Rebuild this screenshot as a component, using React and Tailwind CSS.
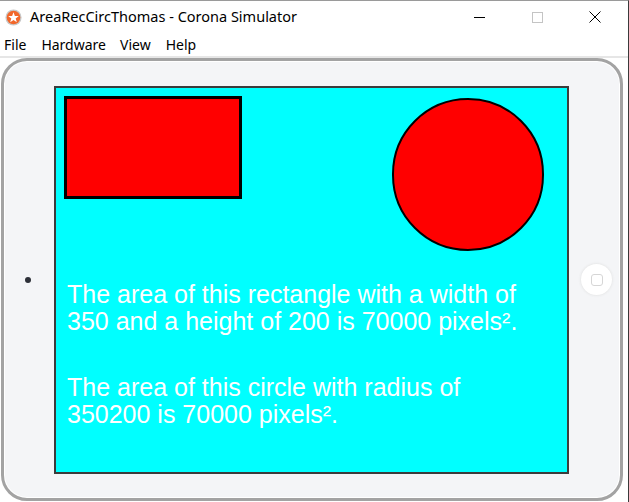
import React from 'react';

const CoronaIcon = () => (
    <svg width="17" height="17" viewBox="0 0 20 20">
        <circle cx="10" cy="10" r="9.5" fill="#c8c8c8" />
        <circle cx="10" cy="10" r="8" fill="#f2672a" />
        <polygon
            points="10,3.8 11.6,8.2 16.2,8.3 12.6,11.1 13.9,15.6 10,13 6.1,15.6 7.4,11.1 3.8,8.3 8.4,8.2"
            fill="#ffffff"
        />
    </svg>
);

const App = () => {
    const sans = { fontFamily: '"Segoe UI", "Noto Sans", sans-serif' };

    return (
        <div className="w-[629px] h-[502px] bg-white flex flex-col overflow-hidden border-t border-[#9a9a9a] border-r border-r-[#3a3a3a]">
            {/* Title bar */}
            <div className="h-[32px] flex items-center shrink-0" style={sans}>
                <div className="ml-[5px] mt-[1px] flex items-center">
                    <CoronaIcon />
                </div>
                <span className="ml-[8px] text-[14.5px] text-black">AreaRecCircThomas - Corona Simulator</span>
                <div className="ml-auto mr-[5px] flex items-center h-full">
                    <div className="w-[58px] h-full flex items-center justify-center">
                        <div className="w-[11px] h-[1px] bg-black mt-[1px]" />
                    </div>
                    <div className="w-[58px] h-full flex items-center justify-center">
                        <div className="w-[11px] h-[11px] border border-[#c4c4c4]" />
                    </div>
                    <div className="w-[57px] h-full flex items-center justify-center">
                        <svg width="12" height="12" viewBox="0 0 12 12">
                            <path d="M0.5 0.5 L11.5 11.5 M11.5 0.5 L0.5 11.5" stroke="#000" strokeWidth="1" />
                        </svg>
                    </div>
                </div>
            </div>

            {/* Menu bar */}
            <div className="h-[23px] flex items-center text-[14px] text-black shrink-0" style={sans}>
                <span className="ml-[4px]">File</span>
                <span className="ml-[15px]">Hardware</span>
                <span className="ml-[14px]">View</span>
                <span className="ml-[15px]">Help</span>
            </div>
            <div className="h-[2px] bg-[#e6e6e6] shrink-0" />

            {/* Device */}
            <div className="flex-1 pl-[1px] pr-[5px] pb-[1px] flex">
                <div className="flex-1 rounded-[26px] border-[3px] border-[#a3a3a3] bg-[#f4f5f7] shadow-[inset_0_0_0_1px_#ffffff] flex items-center">
                    <div className="w-[50px] h-full flex items-center justify-center">
                        <div className="w-[6px] h-[6px] rounded-full bg-[#2d3038] ml-[-2px]" />
                    </div>
                    <div className="w-[515px] h-[388px] border-2 border-[#3c3c3c] bg-[#00ffff] flex flex-col" style={{ fontFamily: '"Liberation Sans", Arial, sans-serif' }}>
                        <div className="flex justify-between items-start px-[8px] pt-[8px]">
                            <div className="w-[178px] h-[103px] bg-[#ff0000] border-[3px] border-black" />
                            <div className="w-[152px] h-[153px] rounded-full bg-[#ff0000] border-2 border-black mr-[15px] mt-[2px]" />
                        </div>
                        <div className="pl-[11px] mt-[30px] text-white text-[25px] leading-[27px]">
                            <p>The area of this rectangle with a width of<br />350 and a height of 200 is 70000 pixels².</p>
                            <p className="mt-[39px]">The area of this circle with radius of<br />350200 is 70000 pixels².</p>
                        </div>
                    </div>
                    <div className="flex-1 h-full flex items-center justify-center">
                        <div className="w-[31px] h-[31px] rounded-full bg-white shadow-[0_0_3px_#dcdcdc] flex items-center justify-center ml-[4px]">
                            <div className="w-[12px] h-[12px] rounded-[3px] border border-[#d6d6d6]" />
                        </div>
                    </div>
                </div>
            </div>
        </div>
    );
};

export default App;
